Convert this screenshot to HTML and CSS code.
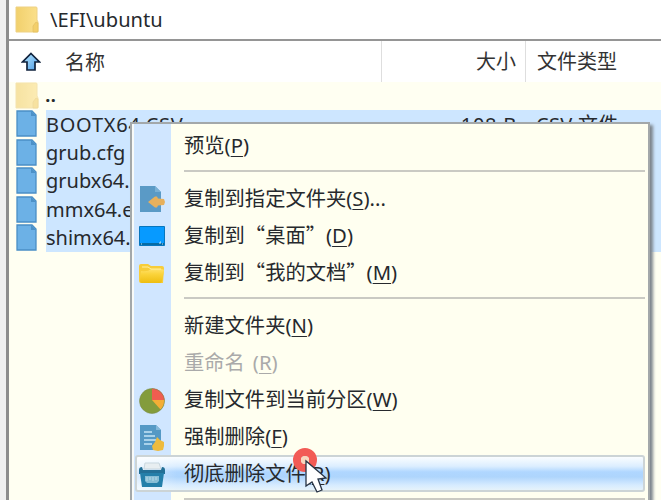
FILE: index.html
```html
<!DOCTYPE html>
<html lang="zh-CN">
<head>
<meta charset="utf-8">
<title>\EFI\ubuntu</title>
<link rel="stylesheet" href="styles.css">
</head>
<body>
<svg class="defs" width="0" height="0">
  <defs>
    <linearGradient id="fold" x1="0" x2="1"><stop offset="0" stop-color="#f1d06c"/><stop offset="1" stop-color="#fbe08c"/></linearGradient>
    <linearGradient id="arrow" x1="0" y1="0" x2="1" y2="1"><stop offset="0" stop-color="#b9e9ff"/><stop offset="1" stop-color="#4c9be6"/></linearGradient>
    <linearGradient id="gold" x1="0" y1="0" x2="0" y2="1"><stop offset="0" stop-color="#ffe16a"/><stop offset=".35" stop-color="#fbd43c"/><stop offset="1" stop-color="#eebd10"/></linearGradient>
    <symbol id="folder" viewBox="0 0 24 28"><path d="M1 1h20q1 0 1 1v12l1 2v9q0 1-1 1H1z" fill="url(#fold)" stroke="#eed184"/><path d="M18 26v-6l3-4 2 1v9z" fill="#f3cf6b" stroke="#e3bf62" stroke-width=".7"/></symbol>
    <symbol id="file" viewBox="0 0 22 28"><path d="M1 1h15l4 4v21H1z" fill="#6cb1e6" stroke="#4a8fc6" stroke-width="1.300"/><path d="M15 1v5h5z" fill="#4c91c7"/></symbol>
  </defs>
</svg>
<div class="window">
  <div class="path"><svg class="ico"><use href="#folder"/></svg><span>\EFI\ubuntu</span></div>
  <div class="head">
    <div class="name"><svg class="up" viewBox="0 0 20 20"><path d="M10 1.500 18.500 10H14v8H6v-8H1.500z" fill="url(#arrow)" stroke="#10223c" stroke-width="1.700"/></svg>名称</div>
    <div class="size">大小</div>
    <div class="type">文件类型</div>
  </div>
  <div class="row parent"><svg class="ico faded"><use href="#folder"/></svg><span class="dots">..</span></div>
  <div class="row"><svg class="ico doc"><use href="#file"/></svg><div class="cells wide"><span class="fn">BOOTX64.CSV</span><span class="sz">108 B</span><span class="ty">CSV 文件</span></div></div>
  <div class="row"><svg class="ico doc"><use href="#file"/></svg><div class="cells"><span class="fn">grub.cfg</span></div></div>
  <div class="row"><svg class="ico doc"><use href="#file"/></svg><div class="cells"><span class="fn">grubx64.efi</span></div></div>
  <div class="row"><svg class="ico doc"><use href="#file"/></svg><div class="cells"><span class="fn">mmx64.efi</span></div></div>
  <div class="row"><svg class="ico doc"><use href="#file"/></svg><div class="cells"><span class="fn">shimx64.efi</span></div></div>
</div>

<div class="menu">
  <div class="item"><i></i><span>预览<b>(<u>P</u>)</b></span></div>
  <div class="sep"></div>
  <div class="item"><i><svg viewBox="0 0 28 28"><path d="M2 1h15l6 6v20H2z" fill="#5a9ac6"/><path d="M17 1v6h6z" fill="#79b0d5"/><path d="m10 17 7-5.500h2l1 2 6 .5 1 3-1 3-6 .5-1 2h-2z" fill="#e7b05c"/></svg></i><span>复制到指定文件夹<b>(<u>S</u>)...</b></span></div>
  <div class="item"><i><svg viewBox="0 0 28 28"><path d="M1.500 4.500h25v19h-25z" fill="#079aff" stroke="#0776bd"/><path d="M2 21h24v2H2z" fill="#056ba5"/><path d="M3 22h1m17-1h2m1 1h1m-3-2h1" stroke="#c7e6f5"/></svg></i><span>复制到“桌面”<b>(<u>D</u>)</b></span></div>
  <div class="item"><i><svg viewBox="0 0 28 28"><path d="M1 7q0-2 2-2h7l3 2h11q2 0 2 2l-1 15H3q-2 0-2-2z" fill="#f7cd3a"/><path d="M3 12q7 1 10-2h10q3 0 3 2l-2 10q0 2-2 2H4q-2 0-2-2z" fill="url(#gold)"/><path d="M4 8h6l3 2h10" stroke="#fff0a0" fill="none"/></svg></i><span>复制到“我的文档”<b>(<u>M</u>)</b></span></div>
  <div class="sep"></div>
  <div class="item"><i></i><span>新建文件夹<b>(<u>N</u>)</b></span></div>
  <div class="item off"><i></i><span>重命名<b class="gap">(<u>R</u>)</b></span></div>
  <div class="item"><i><svg viewBox="0 0 28 28"><circle cx="14" cy="15" r="12.500" fill="#839c3c"/><path d="M14 14V2.500A12 12 0 0 1 26.500 14z" fill="#f05d50"/><path d="M14 14h12.500q0 6-4 9.500z" fill="#f4ae36"/><circle cx="14" cy="15" r="12.500" fill="none" stroke="#778745" stroke-opacity=".5"/></svg></i><span>复制文件到当前分区<b>(<u>W</u>)</b></span></div>
  <div class="item"><i><svg viewBox="0 0 28 28"><path d="M2 2h16l5 5v20H2z" fill="#5599c5"/><path d="M18 2v5h5z" fill="#83b8da"/><path d="M6 9h8M6 13h11M6 17h12M6 21h8" stroke="#a9d2ea" stroke-width="2"/><path d="m19 14 3 3 4 2v4l-1 4-5 1-5-1-1-4 3-4z" fill="#eebb3e"/></svg></i><span>强制删除<b>(<u>F</u>)</b></span></div>
  <div class="item hot"><i><svg viewBox="0 0 28 28"><path d="m6 9 1-6h14l2 6z" fill="#e8eef1" stroke="#c9d7df"/><path d="M1 10q0-3 3-3l1 3h18l1-3q3 0 3 3v4H1z" fill="#236f96"/><path d="M2 13h24l-2 14H4z" fill="#247fa9"/><path d="M7 16h14v5l-2 2H9l-2-2z" fill="#86bdd5"/><path d="M9 17v4m3-4v3m3-3v4m3-4v3" stroke="#b7dbe8"/></svg></i><span>彻底删除文件<b>(<u>R</u>)</b></span></div>
  <div class="sep"></div>
</div>
<svg class="cursor" viewBox="0 0 40 48"><circle cx="15" cy="14" r="8" fill="none" stroke="#f25b55" stroke-width="8"/><circle cx="15" cy="14" r="4" fill="#f9d7bd"/><path d="M16 15v25l6-4 5 10 5-2-4-11 8-1z" fill="#fff" stroke="#273344" stroke-width="1.300"/></svg>
</body>
</html>
```

FILE: styles.css
```css
* { box-sizing: border-box; }
body {
  margin: 0;
  width: 661px;
  height: 500px;
  overflow: hidden;
  position: relative;
  background: #f0f0f0;
  color: #26292d;
  font: 20px/28px "Noto Sans", "Noto Sans CJK SC", sans-serif;
  white-space: nowrap;
}
.defs { position: absolute; }
.window {
  height: 500px;
  margin-left: 6px;
  border-left: 3px solid #8d8d8d;
  background: #fffff2;
}
.path {
  height: 41px;
  display: flex;
  align-items: center;
  padding-left: 6px;
  background: #fff;
  border-bottom: 2px solid #959595;
}
.path span { margin-left: 11px; padding-top: 1px; font-size: 20.1px; }
.ico { width: 24px; height: 28px; flex: none; }
.doc { width: 22px; margin-left: 1px; }
.faded { opacity: .6; }
.head {
  display: flex;
  height: 41px;
  background: #fff;
  font-family: "Noto Sans CJK SC", sans-serif;
  line-height: 39px;
  color: #333;
}
.name { width: 373px; display: flex; align-items: center; padding-left: 12px; border-right: 1px solid #dedede; }
.up { width: 20px; height: 20px; margin-right: 24px; }
.size { width: 144px; text-align: right; padding-right: 9px; border-right: 1px solid #dedede; }
.type { padding-left: 11px; }
.row { height: 28.4px; display: flex; padding-left: 6px; }
.dots { margin-left: 6px; font-weight: 600; line-height: 26px; }
.cells { flex: 1; display: flex; margin-left: 8px; background: #cde6ff; }
.wide { letter-spacing: .75px; line-height: 30px; }
.fn { width: 336px; }
.sz { width: 135px; text-align: right; }
.ty { margin-left: 19px; letter-spacing: .3px; }
.menu {
  position: absolute;
  left: 130px;
  top: 122px;
  width: 520px;
  height: 400px;
  padding: 3px 3px 0;
  border: 2px solid #a3a8aa;
  background: linear-gradient(90deg, #f8faf8 2px, #d0e6ff 2px, #d0e6ff 39px, #fffff0 39px);
  box-shadow: 3px 3px 3px #7c848c;
}
.item {
  height: 37px;
  display: flex;
  align-items: center;
  font: 20.3px/36px "Noto Sans CJK SC", sans-serif;
  border: 1px solid transparent;
}
.item span { padding-bottom: 2px; }
.item i { width: 28px; height: 28px; margin: 0 18px 0 2px; flex: none; }
.item svg { display: block; width: 28px; height: 28px; }
.item b { font-family: "Noto Sans", sans-serif; font-weight: 400; }
.item u { text-decoration-thickness: 1px; text-underline-offset: 3px; }
.item .gap { margin-left: 8px; }
.off { color: #aaa; }
.sep { height: 16px; margin: 0 0 0 49px; display: flex; align-items: center; }
.sep::before { content: ""; flex: 1; height: 2px; margin-bottom: 2px; background: #cacac3; }
.hot {
  border: 2px solid #ccd4d6;
  border-radius: 3px;
  background: linear-gradient(90deg, #fff8 0, #fff0 40px), linear-gradient(#fafdff 0, #dceeff 28%, #b0d7ff 45%, #aed5fc 60%, #d6ebff 85%, #e6f3fa 100%);
}
.hot i { margin: 0 18px 0 1px; }
.cursor { position: absolute; left: 290px; top: 446px; width: 40px; height: 48px; }
```
